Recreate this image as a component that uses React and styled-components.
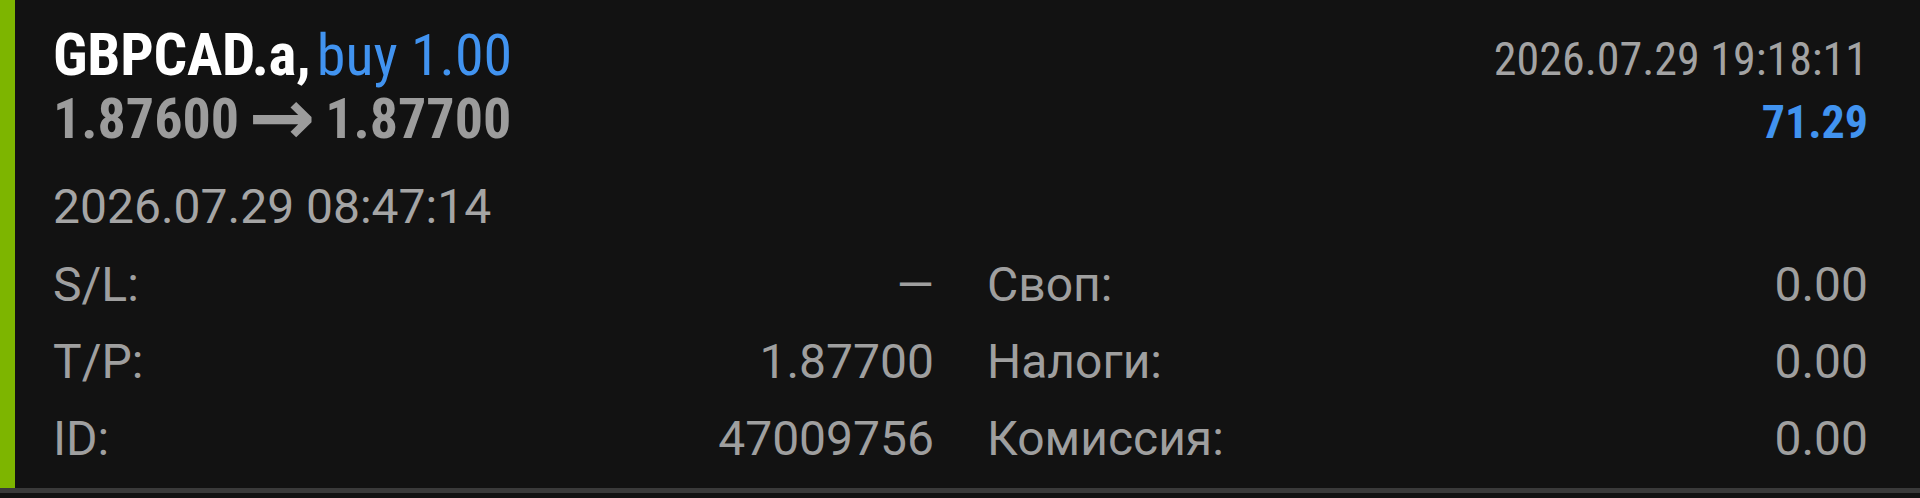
import React from 'react'
import styled, { createGlobalStyle } from 'styled-components'

const GlobalStyle = createGlobalStyle`
  html, body {
    margin: 0;
    padding: 0;
    background: #121212;
  }
`

const condensed = `"Roboto Condensed", Roboto, sans-serif`

const Card = styled.div`
  display: flex;
  background: #121212;
  border-bottom: 5px solid #3a3a3a;
`

const Stripe = styled.div`
  width: 15px;
  flex-shrink: 0;
  background: #7db500;
`

const Body = styled.div`
  flex: 1;
  padding: 23px 52px 11px 38px;
`

const HeadRow = styled.div`
  display: flex;
  justify-content: space-between;
  align-items: baseline;
  height: 64px;
`

const Title = styled.div`
  font-family: ${condensed};
  font-size: ${p => p.$muted ? 56 : 59}px;
  line-height: 64px;
  font-weight: 700;
  letter-spacing: ${p => p.$muted ? 0 : -0.2}px;
  word-spacing: ${p => p.$muted ? -2 : -7}px;
  color: ${p => p.$muted ? '#9c9c9c' : '#ffffff'};
`

const Deal = styled.span`
  font-size: 58px;
  font-weight: 400;
  letter-spacing: 0;
  word-spacing: 0;
  color: #4193f0;
`

const Arrow = styled.span`
  display: inline-block;
  margin: 0 7px;
  font-family: "DejaVu Sans", sans-serif;
  font-weight: 700;
  font-size: 60px;
  line-height: 0;
  transform: scale(1.33, 1.3);
`

const CloseTime = styled.div`
  font-family: ${condensed};
  font-size: 46px;
  line-height: 64px;
  color: #a3a3a3;
`

const Profit = styled.div`
  font-family: ${condensed};
  font-size: 46px;
  line-height: 64px;
  font-weight: 700;
  color: #4193f0;
`

const OpenTime = styled.div`
  margin-top: 24px;
  font-family: Roboto, sans-serif;
  font-size: 48px;
  line-height: 64px;
  color: #a5a5a5;
`

const Details = styled.div`
  margin-top: 7px;
  display: grid;
  grid-template-columns: 1fr 1fr;
  column-gap: 53px;
`

const Field = styled.div`
  display: flex;
  justify-content: space-between;
  font-family: Roboto, sans-serif;
  font-size: 48px;
  line-height: 77px;
  color: #9f9f9f;
`

const rows = [
  ['S/L:', '—', 'Своп:', '0.00'],
  ['T/P:', '1.87700', 'Налоги:', '0.00'],
  ['ID:', '47009756', 'Комиссия:', '0.00'],
]

export default function App() {
  return (
    <>
      <GlobalStyle />
      <Card>
        <Stripe />
        <Body>
          <HeadRow>
            <Title>GBPCAD.a, <Deal>buy 1.00</Deal></Title>
            <CloseTime>2026.07.29 19:18:11</CloseTime>
          </HeadRow>
          <HeadRow>
            <Title $muted>1.87600 <Arrow>→</Arrow> 1.87700</Title>
            <Profit>71.29</Profit>
          </HeadRow>
          <OpenTime>2026.07.29 08:47:14</OpenTime>
          <Details>
            {rows.map(([l1, v1, l2, v2]) => (
              <React.Fragment key={l1}>
                <Field><span>{l1}</span><span>{v1}</span></Field>
                <Field><span>{l2}</span><span>{v2}</span></Field>
              </React.Fragment>
            ))}
          </Details>
        </Body>
      </Card>
    </>
  )
}
